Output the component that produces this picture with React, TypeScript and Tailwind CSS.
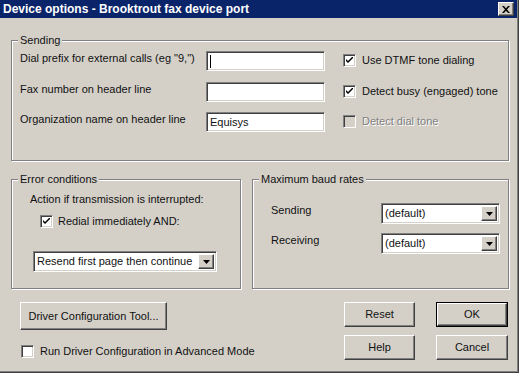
import type { ReactNode } from "react";

const raised =
  "border border-t-white border-l-white border-r-[#404040] border-b-[#404040] shadow-[inset_-1px_-1px_0_#808080]";
const sunken =
  "border border-t-[#808080] border-l-[#808080] border-r-white border-b-white shadow-[inset_1px_1px_0_#404040,inset_-1px_-1px_0_#d4d0c8]";
const etched = "border border-[#808080] shadow-[1px_1px_0_#fff,inset_1px_1px_0_#fff]";

const CheckBox = ({ checked, disabled }: { checked?: boolean; disabled?: boolean }) => (
  <span
    className={`w-[13px] h-[13px] shrink-0 flex items-center justify-center ${sunken} ${
      disabled ? "bg-[#d4d0c8]" : "bg-white"
    }`}
  >
    {checked && (
      <svg width="7" height="7" viewBox="0 0 7 7">
        <path d="M0 2 L0 4 L2 6 L7 1 L7 -1 L2 4 Z" fill="#000" />
      </svg>
    )}
  </span>
);

const Arrow = () => (
  <svg width="7" height="4" viewBox="0 0 7 4">
    <path d="M0 0 H7 L3.5 4 Z" fill="#000" />
  </svg>
);

const Combo = ({ value, className }: { value: string; className: string }) => (
  <div className={`h-[21px] bg-white flex items-center p-[2px] ${sunken} ${className}`}>
    <span className="flex-1 pl-[1px] whitespace-nowrap overflow-hidden">{value}</span>
    <span className={`w-[16px] h-[15px] bg-[#d4d0c8] flex items-center justify-center ${raised}`}>
      <Arrow />
    </span>
  </div>
);

const Button = ({ children, className, isDefault }: { children: ReactNode; className: string; isDefault?: boolean }) =>
  isDefault ? (
    <div className={`border border-black ${className}`}>
      <div className={`w-full h-full flex items-center justify-center ${raised}`}>{children}</div>
    </div>
  ) : (
    <div className={`flex items-center justify-center ${raised} ${className}`}>{children}</div>
  );

const Row = ({
  label,
  value,
  caret,
  check,
  checked,
  disabled,
  className,
}: {
  label: string;
  value?: string;
  caret?: boolean;
  check: string;
  checked?: boolean;
  disabled?: boolean;
  className?: string;
}) => (
  <div className={`flex items-start h-[20px] ${className ?? ""}`}>
    <span className="w-[186px] pt-[1px] whitespace-nowrap">{label}</span>
    <div className={`w-[119px] h-[20px] bg-white flex items-center pl-[3px] ${sunken}`}>
      {caret && <span className="w-px h-[13px] bg-black" />}
      {value}
    </div>
    <div className="ml-[18px] mt-[3px] flex items-center gap-[6px]">
      <CheckBox checked={checked} disabled={disabled} />
      <span className={disabled ? "text-[#808080] [text-shadow:1px_1px_0_#fff]" : ""}>{check}</span>
    </div>
  </div>
);

export default function App() {
  return (
    <div className="w-[519px] h-[373px] bg-[#d4d0c8] font-['Liberation_Sans',Arial,sans-serif] text-[11px] leading-[13px] text-[#111] border-r border-b border-[#404040] flex">
      <div className="flex-1 flex flex-col border-r border-b border-[#808080]">
        <div className="h-[18px] bg-[#0a246a] flex items-center justify-between pl-[3px] pr-[3px]">
          <span className="text-white text-[12px] font-bold whitespace-nowrap">
            Device options - Brooktrout fax device port
          </span>
          <span className={`w-[16px] h-[14px] bg-[#d4d0c8] flex items-center justify-center ${raised}`}>
            <svg width="8" height="7" viewBox="0 0 8 7">
              <path d="M0 0 L2 0 L4 2.3 L6 0 L8 0 L5 3.5 L8 7 L6 7 L4 4.7 L2 7 L0 7 L3 3.5 Z" fill="#000" />
            </svg>
          </span>
        </div>

        <div className="pl-[11px] pr-[8px] pt-[16px]">
          <fieldset className={`h-[127px] ${etched}`}>
            <legend className="ml-[6px] px-[2px] bg-[#d4d0c8]">Sending</legend>
            <div className="pl-[8px] pt-[4px]">
              <Row label={'Dial prefix for external calls (eg "9,")'} caret check="Use DTMF tone dialing" checked />
              <Row label="Fax number on header line" check="Detect busy (engaged) tone" checked className="mt-[11px]" />
              <Row
                label="Organization name on header line"
                value="Equisys"
                check="Detect dial tone"
                disabled
                className="mt-[10px]"
              />
            </div>
          </fieldset>

          <div className="mt-[12px] flex gap-[11px]">
            <fieldset className={`w-[230px] h-[116px] ${etched}`}>
              <legend className="ml-[6px] px-[2px] bg-[#d4d0c8]">Error conditions</legend>
              <div className="pl-[18px] pt-[7px]">
                <div>Action if transmission is interrupted:</div>
                <div className="ml-[10px] mt-[9px] flex items-center gap-[5px]">
                  <CheckBox checked />
                  <span>Redial immediately AND:</span>
                </div>
                <Combo value="Resend first page then continue" className="ml-[3px] mt-[23px] w-[184px]" />
              </div>
            </fieldset>

            <fieldset className={`flex-1 h-[116px] ${etched}`}>
              <legend className="ml-[6px] px-[2px] bg-[#d4d0c8]">Maximum baud rates</legend>
              <div className="pl-[18px] pt-[17px] flex flex-col gap-[9px]">
                <div className="flex items-start">
                  <span className="w-[110px] pt-[1px]">Sending</span>
                  <Combo value="(default)" className="w-[119px]" />
                </div>
                <div className="flex items-start">
                  <span className="w-[110px] pt-[1px]">Receiving</span>
                  <Combo value="(default)" className="w-[119px]" />
                </div>
              </div>
            </fieldset>
          </div>

          <div className="mt-[13px] flex justify-between pr-[1px]">
            <div className="pl-[9px] flex flex-col">
              <Button className="w-[147px] h-[28px]">Driver Configuration Tool...</Button>
              <div className="mt-[15px] ml-[1px] flex items-center gap-[6px]">
                <CheckBox />
                <span>Run Driver Configuration in Advanced Mode</span>
              </div>
            </div>
            <div className="grid grid-cols-[71px_72px] gap-x-[21px] gap-y-[8px]">
              <Button className="h-[25px]">Reset</Button>
              <Button className="h-[25px]" isDefault>
                OK
              </Button>
              <Button className="h-[25px]">Help</Button>
              <Button className="h-[25px]">Cancel</Button>
            </div>
          </div>
        </div>
      </div>
    </div>
  );
}
